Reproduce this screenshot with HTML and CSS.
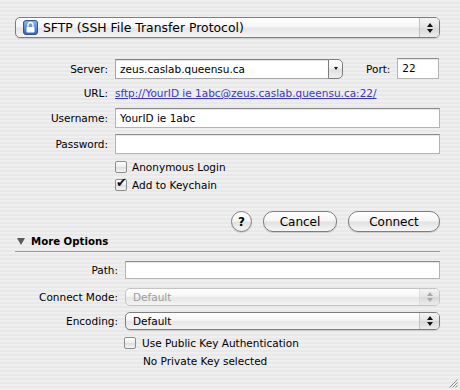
FILE: index.html
```html
<!DOCTYPE html>
<html lang="en">
<head>
    <meta charset="UTF-8">
    <title>Connect</title>
    <link rel="stylesheet" href="styles.css">
</head>
<body>
    <div class="window">
        <div class="popup popup-large">
            <svg class="lock-icon" width="15" height="15" viewBox="0 0 15 15">
                <defs>
                    <linearGradient id="lockbg" x1="0" y1="0" x2="0" y2="1">
                        <stop offset="0" stop-color="#8fb6e6"/>
                        <stop offset="1" stop-color="#2f66b5"/>
                    </linearGradient>
                </defs>
                <rect x="0.5" y="0.5" width="14" height="14" rx="2.5" fill="url(#lockbg)" stroke="#2a5590"/>
                <path d="M5 7 V5 a2.5 2.5 0 0 1 5 0 V7" fill="none" stroke="#fff" stroke-width="1.3"/>
                <rect x="3.5" y="7" width="8" height="5.5" rx="0.8" fill="#fff"/>
            </svg>
            <span class="popup-text">SFTP (SSH File Transfer Protocol)</span>
            <span class="stepper"><i class="up"></i><i class="down"></i></span>
        </div>

        <div class="row row-server">
            <span class="label">Server:</span>
            <div class="combo">
                <span class="combo-text">zeus.caslab.queensu.ca</span>
                <span class="combo-btn"><i class="down"></i></span>
            </div>
            <span class="port-label">Port:</span>
            <div class="field field-port">22</div>
        </div>

        <div class="row row-url">
            <span class="label">URL:</span>
            <a class="link" href="#">sftp://YourID ie 1abc@zeus.caslab.queensu.ca:22/</a>
        </div>

        <div class="row row-user">
            <span class="label">Username:</span>
            <div class="field field-wide">YourID ie 1abc</div>
        </div>

        <div class="row row-pass">
            <span class="label">Password:</span>
            <div class="field field-wide"></div>
        </div>

        <div class="checks">
            <div class="check-row"><span class="checkbox"></span>Anonymous Login</div>
            <div class="check-row"><span class="checkbox checked"><b class="tick">&#10004;</b></span>Add to Keychain</div>
        </div>

        <div class="buttons">
            <span class="help-btn">?</span>
            <span class="btn btn-cancel">Cancel</span>
            <span class="btn btn-connect">Connect</span>
        </div>

        <div class="more-options">
            <i class="disclosure"></i>More Options
        </div>

        <div class="row row-path">
            <span class="label label-wide">Path:</span>
            <div class="field field-small"></div>
        </div>

        <div class="row row-mode">
            <span class="label label-wide">Connect Mode:</span>
            <div class="popup popup-small disabled">
                <span class="popup-text">Default</span>
                <span class="stepper"><i class="up"></i><i class="down"></i></span>
            </div>
        </div>

        <div class="row row-encoding">
            <span class="label label-wide">Encoding:</span>
            <div class="popup popup-small">
                <span class="popup-text">Default</span>
                <span class="stepper"><i class="up"></i><i class="down"></i></span>
            </div>
        </div>

        <div class="check-row key-row"><span class="checkbox"></span>Use Public Key Authentication</div>
        <div class="key-status">No Private Key selected</div>
    </div>

    <svg class="grip" width="10" height="10" viewBox="0 0 10 10">
        <path d="M9.5 1.5 L1.5 9.5 M9.5 4.5 L4.5 9.5 M9.5 7.5 L7.5 9.5" stroke="#8c8c8c" stroke-width="1"/>
    </svg>
</body>
</html>
```

FILE: styles.css
```css
body {
    margin: 0;
    height: 390px;
    overflow: hidden;
    position: relative;
    font-family: "DejaVu Sans", sans-serif;
    font-size: 10.5px;
    color: #000;
    background: repeating-linear-gradient(to bottom, #efefef 0, #efefef 2px, #e8e8e8 2px, #e8e8e8 4px);
}
.window {
    padding: 17px 20px 0 15px;
}
.row {
    display: flex;
    align-items: center;
}
.label {
    flex: none;
    width: 93px;
    margin-right: 7px;
    text-align: right;
}
.label-wide {
    width: 103px;
}

/* popups */
.popup {
    display: flex;
    align-items: center;
    box-sizing: border-box;
    border: 1px solid #7d7d7d;
    border-radius: 5px;
    background: linear-gradient(#ffffff, #f6f6f6 45%, #e6e6e6 55%, #f4f4f4);
    box-shadow: 0 1px 1px rgba(0, 0, 0, 0.12);
}
.popup-large {
    height: 21px;
    font-size: 12.4px;
    padding-left: 7px;
}
.lock-icon {
    flex: none;
    margin-right: 5px;
}
.popup-small {
    flex: 1;
    height: 18px;
    padding-left: 7px;
}
.popup.disabled {
    border-color: #c4c4c4;
    color: #9c9c9c;
    box-shadow: none;
}
.stepper {
    margin-left: auto;
    width: 19px;
    height: 100%;
    border-left: 1px solid #c2c2c2;
    background: linear-gradient(#f4f4f4, #e4e4e4 50%, #d8d8d8 52%, #ececec);
    border-radius: 0 4px 4px 0;
    display: flex;
    flex-direction: column;
    align-items: center;
    justify-content: center;
    gap: 2px;
}
.disabled .stepper {
    border-left-color: #dddddd;
}
.up {
    width: 0;
    height: 0;
    border-left: 3px solid transparent;
    border-right: 3px solid transparent;
    border-bottom: 4px solid #111;
}
.down {
    width: 0;
    height: 0;
    border-left: 3px solid transparent;
    border-right: 3px solid transparent;
    border-top: 4px solid #111;
}
.disabled .up {
    border-bottom-color: #a8a8a8;
}
.disabled .down {
    border-top-color: #a8a8a8;
}

/* server row */
.row-server {
    margin-top: 20px;
    height: 21px;
}
.combo {
    display: flex;
    width: 228px;
    height: 20px;
}
.combo-text {
    flex: 1;
    box-sizing: border-box;
    padding: 3px 0 0 4px;
    background: #fff;
    border: 1px solid #a6a6a6;
    border-top-color: #7f7f7f;
    border-right: none;
    box-shadow: inset 0 1px 1px rgba(0, 0, 0, 0.12);
}
.combo-btn {
    width: 15px;
    box-sizing: border-box;
    border: 1px solid #7d7d7d;
    border-radius: 0 5px 5px 0;
    background: linear-gradient(#ffffff, #f2f2f2 45%, #e0e0e0 55%, #f0f0f0);
    display: flex;
    align-items: center;
    justify-content: center;
}
.combo-btn .down {
    border-left-width: 2.5px;
    border-right-width: 2.5px;
    border-top-width: 3px;
}
.port-label {
    margin-left: 23px;
    margin-right: 7px;
}

/* text fields */
.field {
    box-sizing: border-box;
    height: 20px;
    padding: 3px 0 0 4px;
    background: #fff;
    border: 1px solid #b4b4b4;
    border-top-color: #8a8a8a;
    box-shadow: inset 0 1px 1px rgba(0, 0, 0, 0.1);
}
.field-port {
    width: 42px;
    height: 21px;
}
.field-wide {
    flex: 1;
}
.field-small {
    flex: 1;
    height: 18px;
}

.row-url {
    margin-top: 7px;
    height: 14px;
}
.link {
    color: #3a36d0;
    text-decoration: underline;
}
.row-user {
    margin-top: 8px;
}
.row-pass {
    margin-top: 6px;
}

/* checkboxes */
.checks {
    margin-top: 4px;
    padding-left: 100px;
}
.check-row {
    display: flex;
    align-items: center;
    height: 18px;
}
.checkbox {
    flex: none;
    position: relative;
    box-sizing: border-box;
    width: 12px;
    height: 12px;
    margin-right: 5px;
    border: 1px solid #8c8c8c;
    border-radius: 2px;
    background: linear-gradient(#ffffff, #ececec 50%, #dedede 52%, #f4f4f4);
}
.tick {
    position: absolute;
    left: 0;
    top: -4px;
    font-size: 13px;
    font-weight: normal;
    line-height: 13px;
    color: #111;
}

/* buttons */
.buttons {
    margin-top: 17px;
    display: flex;
    justify-content: flex-end;
    align-items: center;
    gap: 11px;
    font-size: 12px;
}
.btn,
.help-btn {
    box-sizing: border-box;
    height: 21px;
    border: 1px solid #7e7e7e;
    background: linear-gradient(#ffffff, #f6f6f6 45%, #e2e2e2 55%, #f6f6f6);
    box-shadow: 0 1px 1px rgba(0, 0, 0, 0.15);
    display: flex;
    align-items: center;
    justify-content: center;
}
.help-btn {
    width: 21px;
    border-radius: 50%;
    font-weight: bold;
    font-size: 12px;
}
.btn {
    border-radius: 10px;
}
.btn-cancel {
    width: 74px;
}
.btn-connect {
    width: 92px;
}

/* more options */
.more-options {
    margin-top: 2px;
    height: 15px;
    padding: 0 0 2px 2px;
    border-bottom: 1px solid #9c9c9c;
    display: flex;
    align-items: center;
    font-weight: bold;
    font-size: 10.2px;
}
.disclosure {
    width: 0;
    height: 0;
    margin-right: 6px;
    border-left: 4.5px solid transparent;
    border-right: 4.5px solid transparent;
    border-top: 7px solid #5a5a5a;
}
.row-path {
    margin-top: 9px;
}
.row-mode {
    margin-top: 9px;
}
.row-encoding {
    margin-top: 6px;
}
.key-row {
    margin-top: 4px;
    padding-left: 109px;
    height: 17px;
}
.key-row .checkbox {
    margin-right: 6px;
}
.key-status {
    margin-top: 3px;
    padding-left: 128px;
    height: 14px;
    line-height: 14px;
}
.grip {
    position: absolute;
    right: 2px;
    bottom: 2px;
}
```
